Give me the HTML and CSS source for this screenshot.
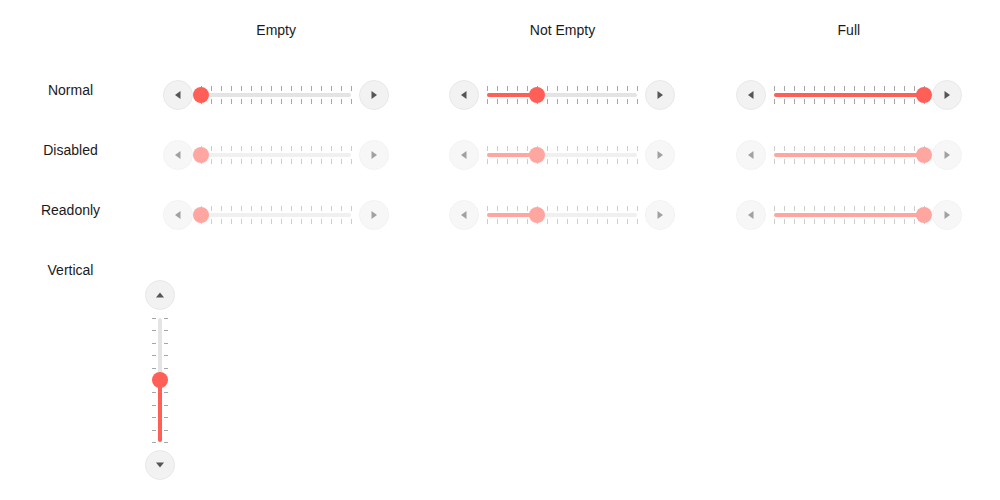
FILE: index.html
```html
<!DOCTYPE html>
<html>
<head>
<meta charset="utf-8">
<link rel="stylesheet" href="styles.css">
</head>
<body>
<div class="grid">
  <div class="head"></div>
  <div class="head">Empty</div>
  <div class="head">Not Empty</div>
  <div class="head">Full</div>

  <div class="label">Normal</div>
  <div class="cell">
    <div class="slider">
      <button class="btn"><svg viewBox="0 0 10 10" width="10" height="10"><path d="M7.5 1L2 5L7.5 9Z"/></svg></button>
      <div class="rail"><div class="ticks top"></div><div class="track"><div class="fill" style="width:0%"></div></div><div class="ticks bottom"></div><div class="thumb" style="left:0%"></div></div>
      <button class="btn"><svg viewBox="0 0 10 10" width="10" height="10"><path d="M2.5 1L8 5L2.5 9Z"/></svg></button>
    </div>
  </div>
  <div class="cell">
    <div class="slider">
      <button class="btn"><svg viewBox="0 0 10 10" width="10" height="10"><path d="M7.5 1L2 5L7.5 9Z"/></svg></button>
      <div class="rail"><div class="ticks top"></div><div class="track"><div class="fill" style="width:33.333%"></div></div><div class="ticks bottom"></div><div class="thumb" style="left:33.333%"></div></div>
      <button class="btn"><svg viewBox="0 0 10 10" width="10" height="10"><path d="M2.5 1L8 5L2.5 9Z"/></svg></button>
    </div>
  </div>
  <div class="cell">
    <div class="slider">
      <button class="btn"><svg viewBox="0 0 10 10" width="10" height="10"><path d="M7.5 1L2 5L7.5 9Z"/></svg></button>
      <div class="rail"><div class="ticks top"></div><div class="track"><div class="fill" style="width:100%"></div></div><div class="ticks bottom"></div><div class="thumb" style="left:100%"></div></div>
      <button class="btn"><svg viewBox="0 0 10 10" width="10" height="10"><path d="M2.5 1L8 5L2.5 9Z"/></svg></button>
    </div>
  </div>

  <div class="label">Disabled</div>
  <div class="cell">
    <div class="slider dim">
      <button class="btn"><svg viewBox="0 0 10 10" width="10" height="10"><path d="M7.5 1L2 5L7.5 9Z"/></svg></button>
      <div class="rail"><div class="ticks top"></div><div class="track"><div class="fill" style="width:0%"></div></div><div class="ticks bottom"></div><div class="thumb" style="left:0%"></div></div>
      <button class="btn"><svg viewBox="0 0 10 10" width="10" height="10"><path d="M2.5 1L8 5L2.5 9Z"/></svg></button>
    </div>
  </div>
  <div class="cell">
    <div class="slider dim">
      <button class="btn"><svg viewBox="0 0 10 10" width="10" height="10"><path d="M7.5 1L2 5L7.5 9Z"/></svg></button>
      <div class="rail"><div class="ticks top"></div><div class="track"><div class="fill" style="width:33.333%"></div></div><div class="ticks bottom"></div><div class="thumb" style="left:33.333%"></div></div>
      <button class="btn"><svg viewBox="0 0 10 10" width="10" height="10"><path d="M2.5 1L8 5L2.5 9Z"/></svg></button>
    </div>
  </div>
  <div class="cell">
    <div class="slider dim">
      <button class="btn"><svg viewBox="0 0 10 10" width="10" height="10"><path d="M7.5 1L2 5L7.5 9Z"/></svg></button>
      <div class="rail"><div class="ticks top"></div><div class="track"><div class="fill" style="width:100%"></div></div><div class="ticks bottom"></div><div class="thumb" style="left:100%"></div></div>
      <button class="btn"><svg viewBox="0 0 10 10" width="10" height="10"><path d="M2.5 1L8 5L2.5 9Z"/></svg></button>
    </div>
  </div>

  <div class="label">Readonly</div>
  <div class="cell">
    <div class="slider dim">
      <button class="btn"><svg viewBox="0 0 10 10" width="10" height="10"><path d="M7.5 1L2 5L7.5 9Z"/></svg></button>
      <div class="rail"><div class="ticks top"></div><div class="track"><div class="fill" style="width:0%"></div></div><div class="ticks bottom"></div><div class="thumb" style="left:0%"></div></div>
      <button class="btn"><svg viewBox="0 0 10 10" width="10" height="10"><path d="M2.5 1L8 5L2.5 9Z"/></svg></button>
    </div>
  </div>
  <div class="cell">
    <div class="slider dim">
      <button class="btn"><svg viewBox="0 0 10 10" width="10" height="10"><path d="M7.5 1L2 5L7.5 9Z"/></svg></button>
      <div class="rail"><div class="ticks top"></div><div class="track"><div class="fill" style="width:33.333%"></div></div><div class="ticks bottom"></div><div class="thumb" style="left:33.333%"></div></div>
      <button class="btn"><svg viewBox="0 0 10 10" width="10" height="10"><path d="M2.5 1L8 5L2.5 9Z"/></svg></button>
    </div>
  </div>
  <div class="cell">
    <div class="slider dim">
      <button class="btn"><svg viewBox="0 0 10 10" width="10" height="10"><path d="M7.5 1L2 5L7.5 9Z"/></svg></button>
      <div class="rail"><div class="ticks top"></div><div class="track"><div class="fill" style="width:100%"></div></div><div class="ticks bottom"></div><div class="thumb" style="left:100%"></div></div>
      <button class="btn"><svg viewBox="0 0 10 10" width="10" height="10"><path d="M2.5 1L8 5L2.5 9Z"/></svg></button>
    </div>
  </div>

  <div class="label">Vertical</div>
  <div class="cell vcell">
    <div class="vslider">
      <button class="btn"><svg viewBox="0 0 10 10" width="10" height="10"><path d="M1 7.5L5 2.5L9 7.5Z"/></svg></button>
      <div class="vrail"><div class="vticks left"></div><div class="vtrack"><div class="vfill" style="height:50%"></div></div><div class="vticks right"></div><div class="vthumb" style="bottom:50%"></div></div>
      <button class="btn"><svg viewBox="0 0 10 10" width="10" height="10"><path d="M1 2.5L5 7.5L9 2.5Z"/></svg></button>
    </div>
  </div>
</div>
</body>
</html>
```

FILE: styles.css
```css
html, body {
  margin: 0;
  padding: 0;
  background: #ffffff;
}

body {
  font-family: "Liberation Sans", Arial, sans-serif;
  font-size: 14px;
  color: #1a1a1a;
}

.grid {
  display: grid;
  grid-template-columns: 125px repeat(3, 1fr);
  margin: 0 8px;
  padding-top: 22px;
}

.head {
  text-align: center;
  line-height: 16px;
  height: 58px;
}

.label {
  text-align: center;
  line-height: 16px;
  padding-top: 2px;
  height: 58px;
}

.cell {
  display: flex;
  justify-content: center;
  height: 60px;
}

.vcell {
  justify-content: flex-start;
  padding-left: 12px;
  padding-top: 20px;
  height: auto;
}

.slider {
  display: flex;
  align-items: center;
  gap: 8px;
  height: 30px;
}

.btn {
  width: 30px;
  height: 30px;
  padding: 0;
  margin: 0;
  border-radius: 50%;
  border: 1px solid #e8e8e8;
  background: #f2f2f2;
  display: flex;
  align-items: center;
  justify-content: center;
  flex: none;
}

.btn svg {
  display: block;
  fill: #555555;
}

.rail {
  position: relative;
  width: 150px;
  height: 30px;
}

.ticks {
  position: absolute;
  left: 0;
  width: 151px;
  height: 5px;
  background: repeating-linear-gradient(to right, #a6a6a6 0 1px, transparent 1px 10px);
}

.ticks.top { top: 6px; }
.ticks.bottom { top: 19px; }

.track {
  position: absolute;
  left: 0;
  top: 13px;
  width: 150px;
  height: 4px;
  border-radius: 2px;
  background: #e4e4e4;
}

.fill {
  height: 100%;
  border-radius: 2px;
  background: #ff5f56;
}

.thumb {
  position: absolute;
  top: 7px;
  width: 16px;
  height: 16px;
  margin-left: -8px;
  border-radius: 50%;
  background: #ff5f56;
}

.dim {
  opacity: 0.55;
}

.vslider {
  display: flex;
  flex-direction: column;
  align-items: center;
  gap: 8px;
  width: 30px;
}

.vrail {
  position: relative;
  width: 30px;
  height: 124px;
}

.vticks {
  position: absolute;
  top: 0;
  width: 4px;
  height: 125px;
  background: repeating-linear-gradient(to bottom, #a6a6a6 0 1px, transparent 1px 12.4px);
}

.vticks.left { left: 7px; }
.vticks.right { left: 19px; }

.vtrack {
  position: absolute;
  left: 13px;
  top: 0;
  width: 4px;
  height: 124px;
  border-radius: 2px;
  background: #e4e4e4;
  display: flex;
  flex-direction: column;
  justify-content: flex-end;
}

.vfill {
  width: 100%;
  border-radius: 2px;
  background: #ff5f56;
}

.vthumb {
  position: absolute;
  left: 7px;
  width: 16px;
  height: 16px;
  margin-bottom: -8px;
  border-radius: 50%;
  background: #ff5f56;
}
```
